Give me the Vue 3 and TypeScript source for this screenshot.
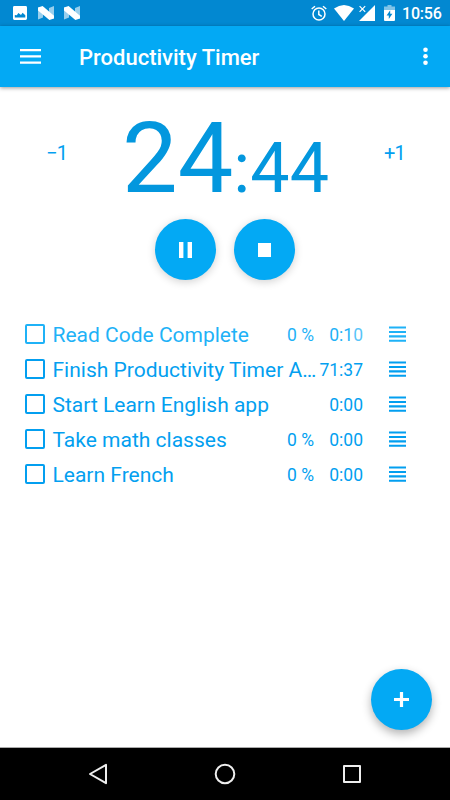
<script setup lang="ts">
import { ref } from 'vue'

interface Task {
  title: string
  percent: string
  hours: string
  last: string
  light?: boolean
  done: boolean
}

const minutes = ref('24')
const seconds = ref('44')

const tasks = ref<Task[]>([
  { title: 'Read Code Complete', percent: '0 %', hours: '0:1', last: '0', light: true, done: false },
  { title: 'Finish Productivity Timer A…', percent: '', hours: '71:3', last: '7', done: false },
  { title: 'Start Learn English app', percent: '', hours: '0:0', last: '0', done: false },
  { title: 'Take math classes', percent: '0 %', hours: '0:0', last: '0', done: false },
  { title: 'Learn French', percent: '0 %', hours: '0:0', last: '0', done: false },
])
</script>

<template>
  <div class="screen">
    <header class="status">
      <svg class="s-image" width="14" height="14" viewBox="0 0 14 14">
        <path fill="#fff" fill-rule="evenodd" d="M1.4 0h11.2Q14 0 14 1.4v11.2q0 1.4-1.4 1.4H1.4Q0 14 0 12.6V1.4Q0 0 1.4 0zM1.8 11.6h10.5V9.3L9.6 6.7 8 9 5.4 6.9 3.8 9.3 1.8 9z" />
      </svg>
      <svg v-for="n in 2" :key="n" class="s-n" width="16" height="14" viewBox="0 0 16 14">
        <path fill="#fff" opacity=".6" d="M0 1.4 5 3v8.5L0 13.4zM16 0v12.4L11 10V2z" />
        <path fill="#fff" d="M0 1.4 4.6 0 16 9.8v2.8L11.4 14 0 4.4z" />
      </svg>
      <span class="spacer"></span>
      <svg class="s-alarm" width="16" height="16" viewBox="0 0 16 16" fill="none" stroke="#fff" stroke-width="1.5">
        <circle cx="8" cy="9" r="6" />
        <path d="M.7 4 4 1.2M15.3 4 12 1.2M7.8 5.5v4l3 1.8" />
      </svg>
      <svg class="s-wifi" width="20" height="16" viewBox="0 0 20 16">
        <path fill="#fff" d="M0 3.6Q10-3.4 20 3.6L10 16z" />
      </svg>
      <svg class="s-cell" width="16" height="16" viewBox="0 0 16 16">
        <path fill="#fff" d="M16 0v16H0z" />
        <path class="gap" d="M0 0h8v7H0z" />
        <path stroke="#fff" stroke-width="1.2" d="m.6 1.2 5.6 5.6m0-5.6L.6 6.8" />
      </svg>
      <svg class="s-battery" width="11" height="16" viewBox="0 0 11 16">
        <path fill="#fff" opacity=".5" d="M3.5 0h4v1.6H11V5H0V1.6h3.5z" />
        <path fill="#fff" fill-rule="evenodd" d="M0 5h11v10q0 1-1 1H1q-1 0-1-1zM6.2 5.2 2.6 10.5h2.2V14l3.6-5.2H6.2z" />
      </svg>
      <span class="time">10:56</span>
    </header>

    <nav class="appbar">
      <svg class="menu" width="21" height="15" viewBox="0 0 21 15">
        <path fill="#fff" d="M0 0h21v2.3H0zM0 6.2h21v2.3H0zM0 12.4h21v2.3H0z" />
      </svg>
      <h1>Productivity Timer</h1>
      <svg class="more" width="5" height="19" viewBox="0 0 5 19" fill="#fff">
        <circle cx="2.5" cy="2.8" r="2.3" /><circle cx="2.5" cy="9.3" r="2.3" /><circle cx="2.5" cy="15.8" r="2.3" />
      </svg>
    </nav>

    <main>
      <section class="timer">
        <button class="step">−1</button>
        <div class="clock"><span class="min">{{ minutes }}</span><span class="sec">:{{ seconds }}</span></div>
        <button class="step">+1</button>
      </section>

      <div class="controls">
        <button class="round" aria-label="Pause">
          <svg width="13" height="16" viewBox="0 0 13 16"><path fill="#fff" d="M0 0h4.4v16H0zM8.6 0H13v16H8.6z" /></svg>
        </button>
        <button class="round" aria-label="Stop">
          <svg width="13" height="14" viewBox="0 0 13 14"><path fill="#fff" d="M0 0h13v14H0z" /></svg>
        </button>
      </div>

      <ul class="tasks">
        <li v-for="task in tasks" :key="task.title" :class="{ light: task.light }">
          <button class="box" :aria-pressed="task.done" @click="task.done = !task.done"></button>
          <span class="title">{{ task.title }}</span>
          <span v-if="task.percent" class="percent">{{ task.percent }}</span>
          <span class="spent">{{ task.hours }}<span class="last">{{ task.last }}</span></span>
          <svg class="handle" width="17" height="16" viewBox="0 0 17 16">
            <path fill="currentColor" d="M0 .5h17v2.1H0zM0 4.9h17v2.1H0zM0 9.3h17v2.1H0zM0 13.7h17v2.1H0z" />
          </svg>
        </li>
      </ul>
    </main>

    <button class="round fab" aria-label="Add task">
      <svg width="15" height="15" viewBox="0 0 15 15"><path stroke="#fff" stroke-width="3.2" d="M7.5 0v15M0 7.5h15" /></svg>
    </button>

    <footer class="navbar">
      <svg width="20" height="22" viewBox="0 0 20 22"><path d="M18 1.8v18.4L2 11z" /></svg>
      <svg width="22" height="22" viewBox="0 0 22 22"><circle cx="11" cy="11" r="9.3" /></svg>
      <svg width="20" height="20" viewBox="0 0 20 20"><path d="M2 2h16v16H2z" /></svg>
    </footer>
  </div>
</template>

<style>
body {
  margin: 0;
  background: #fff;
}
</style>

<style scoped>
.screen {
  position: relative;
  display: flex;
  flex-direction: column;
  width: 450px;
  height: 800px;
  overflow: hidden;
  background: #fff;
  color: #0397de;
  font-family: Roboto, "Liberation Sans", sans-serif;
}
button {
  padding: 0;
  border: 0;
  background: none;
  color: inherit;
  font: inherit;
}
svg {
  display: block;
  flex: none;
}
.status {
  display: flex;
  align-items: center;
  box-sizing: border-box;
  height: 26px;
  padding: 0 9px 0 13px;
  background: #0288d1;
}
.s-n {
  margin-left: 10px;
}
.s-image + .s-n {
  margin-left: 11px;
}
.spacer {
  flex: 1;
}
.s-wifi {
  margin-left: 7px;
}
.s-cell {
  margin-left: 5px;
}
.s-battery {
  margin-left: 9px;
}
.gap {
  fill: #0288d1;
}
.time {
  width: 39px;
  margin-left: 7px;
  padding-top: 2px;
  color: #fff;
  font-size: 16px;
  font-weight: 500;
  line-height: 24px;
  white-space: nowrap;
  letter-spacing: -0.2px;
}
.appbar {
  display: flex;
  align-items: center;
  box-sizing: border-box;
  height: 61px;
  padding: 1px 22px 0 20px;
  background: #03a9f4;
  box-shadow: 0 1px 4px rgba(0, 0, 0, 0.4);
}
.menu,
.more {
  margin-bottom: 1px;
}
h1 {
  flex: 1;
  margin: 0 0 0 38px;
  padding-top: 2px;
  color: #fff;
  font-size: 22px;
  font-weight: 500;
  line-height: 30px;
}
main {
  flex: 1;
}
.timer {
  display: flex;
  justify-content: space-between;
  box-sizing: border-box;
  height: 132px;
  padding: 18px 45px 0 46px;
}
.step {
  align-self: flex-start;
  margin-top: 36px;
  color: #039ff0;
  font-size: 20px;
  line-height: 24px;
  letter-spacing: -0.8px;
}
.clock {
  line-height: 106px;
  white-space: nowrap;
}
.min {
  font-size: 99px;
}
.sec {
  font-size: 70px;
}
.controls {
  display: flex;
  justify-content: center;
  gap: 18px;
}
.round {
  display: flex;
  align-items: center;
  justify-content: center;
  width: 61px;
  height: 61px;
  border-radius: 50%;
  background: #03a9f4;
  box-shadow: 0 2px 8px rgba(0, 0, 0, 0.18);
}
.tasks {
  margin: 0;
  padding: 37px 44px 0 25px;
  color: #039ff0;
  list-style: none;
}
li {
  display: flex;
  align-items: center;
  height: 35px;
}
.light {
  color: #1fb2f7;
}
.box {
  box-sizing: border-box;
  flex: none;
  width: 20px;
  height: 20px;
  margin-bottom: 1px;
  border: 2px solid currentColor;
  border-radius: 2px;
}
.title {
  flex: 1;
  min-width: 0;
  margin-left: 7.5px;
  font-size: 21px;
  line-height: 30px;
  white-space: nowrap;
}
.percent {
  font-size: 17.5px;
}
.spent {
  min-width: 43px;
  font-size: 17.5px;
  text-align: right;
}
.percent + .spent {
  min-width: 49px;
}
.light .last {
  opacity: 0.75;
}
.handle {
  margin: 0 0 1px 26px;
}
.fab {
  position: absolute;
  right: 18px;
  bottom: 70px;
  box-shadow: 0 4px 10px rgba(0, 0, 0, 0.3);
}
.navbar {
  display: flex;
  align-items: center;
  justify-content: space-between;
  box-sizing: border-box;
  height: 53px;
  padding: 0 88px;
  border-top: 1px solid #aaa;
  background: #000;
}
.navbar svg {
  fill: none;
  stroke: #eee;
  stroke-width: 2;
  stroke-linejoin: round;
}
</style>
